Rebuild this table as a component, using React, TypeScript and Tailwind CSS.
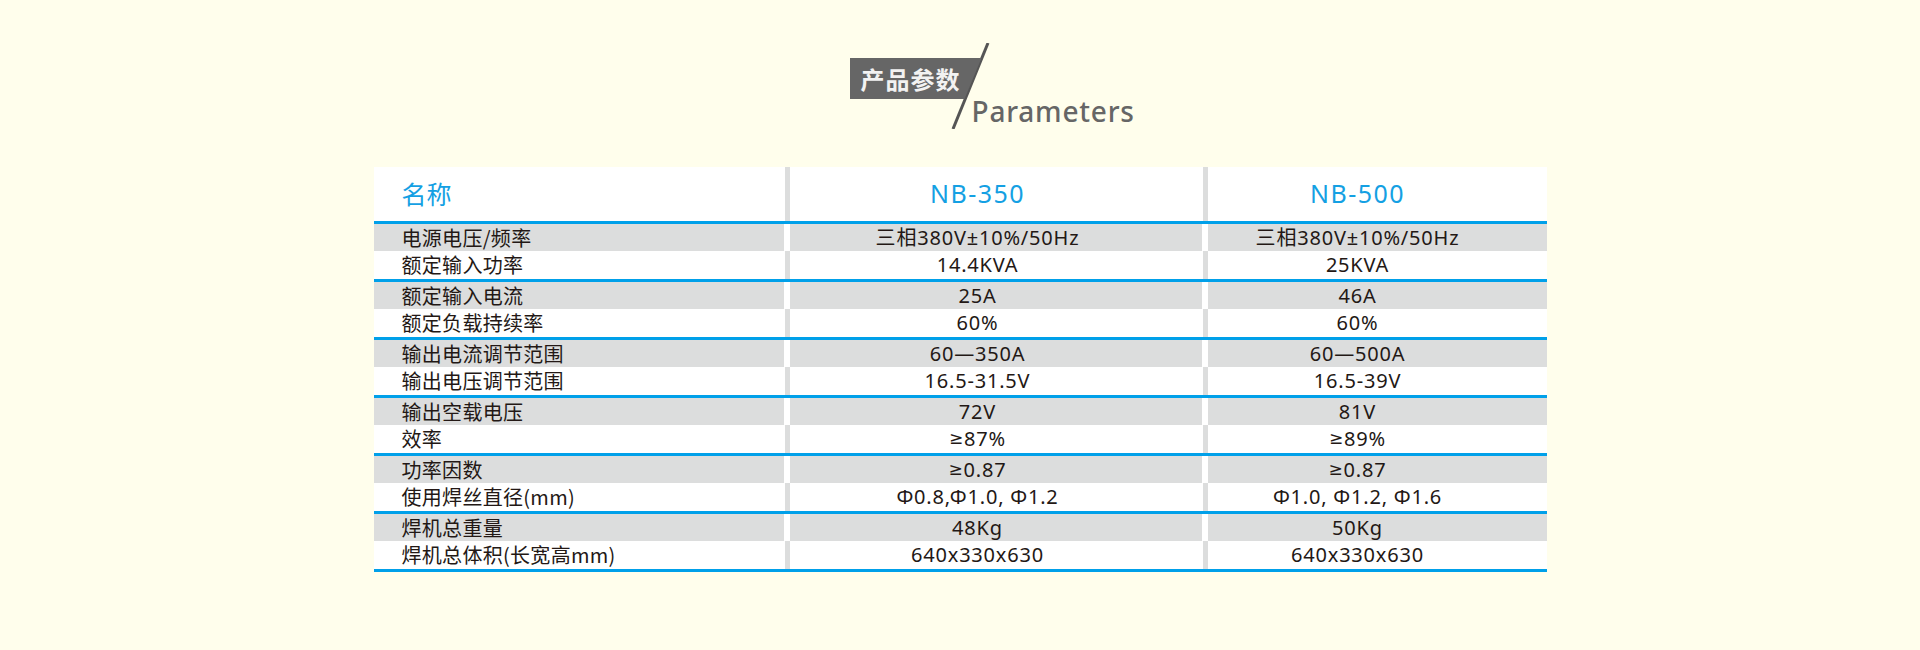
import React from "react"

const rows = [
  ["电源电压/频率", "三相380V±10%/50Hz", "三相380V±10%/50Hz"],
  ["额定输入功率", "14.4KVA", "25KVA"],
  ["额定输入电流", "25A", "46A"],
  ["额定负载持续率", "60%", "60%"],
  ["输出电流调节范围", "60—350A", "60—500A"],
  ["输出电压调节范围", "16.5-31.5V", "16.5-39V"],
  ["输出空载电压", "72V", "81V"],
  ["效率", "≥87%", "≥89%"],
  ["功率因数", "≥0.87", "≥0.87"],
  ["使用焊丝直径(mm)", "Φ0.8,Φ1.0, Φ1.2", "Φ1.0, Φ1.2, Φ1.6"],
  ["焊机总重量", "48Kg", "50Kg"],
  ["焊机总体积(长宽高mm)", "640x330x630", "640x330x630"],
]

const sans = "font-['Noto_Sans','Noto_Sans_CJK_SC',sans-serif]"
const cjk = "font-['Noto_Sans_CJK_SC',sans-serif]"

// the CJK font draws ≥ as a slanted glyph, so give it a latin one
function Value({ text }: { text: string }) {
  if (!text.startsWith("≥")) return <>{text}</>
  return (
    <>
      <span className="font-['DejaVu_Sans',sans-serif] text-[17px]">≥</span>
      {text.slice(1)}
    </>
  )
}

function Divider({ shaded }: { shaded: boolean }) {
  return (
    <div className="flex w-[6px] justify-end bg-white">
      {!shaded && <div className="w-[5px] bg-[#dcdddd]" />}
    </div>
  )
}

function Row({ cells, shaded }: { cells: string[]; shaded: boolean }) {
  const bg = shaded ? "bg-[#dcdddd]" : "bg-white"
  const h = shaded ? "h-[27px]" : "h-[28px]"
  return (
    <div className={`flex ${h}`}>
      <div className={`flex w-[410px] items-center pl-[28px] text-[20px] tracking-[0.3px] text-[#231815] ${cjk} ${bg}`}>
        {cells[0]}
      </div>
      <Divider shaded={shaded} />
      <div className={`flex w-[412px] items-center justify-center pr-[36px] text-[20px] tracking-[0.8px] text-[#231815] ${sans} ${bg}`}>
        <Value text={cells[1]} />
      </div>
      <Divider shaded={shaded} />
      <div className={`flex w-[339px] items-center justify-center pr-[39px] text-[20px] tracking-[0.8px] text-[#231815] ${sans} ${bg}`}>
        <Value text={cells[2]} />
      </div>
    </div>
  )
}

export default function App() {
  return (
    <div className="flex min-h-[650px] w-full justify-center bg-[#fffeec]">
      <div className="flex w-[1173px] flex-col pt-[43px]">
        {/* title */}
        <div className="relative ml-[476px] h-[86px] w-[290px]">
          <svg className="absolute inset-0" width="290" height="86" viewBox="0 0 290 86">
            <line x1="138" y1="0" x2="103" y2="86" stroke="#555555" strokeWidth="3" />
          </svg>
          <div
            className={`mt-[15px] flex h-[41px] w-[132px] items-center bg-[#666666] pl-[11px] text-[24px] font-bold tracking-[1px] text-[#f2f2f2] [clip-path:polygon(0_0,100%_0,115px_100%,0_100%)] ${cjk}`}
          >
            产品参数
          </div>
          <div className={`ml-[122px] mt-[-2px] text-[28px] leading-none font-medium tracking-[0.8px] text-[#666666] ${sans}`}>
            Parameters
          </div>
        </div>

        {/* table */}
        <div className="mt-[38px] flex flex-col">
          <div className="flex h-[54px]">
            <div className={`flex w-[410px] items-center bg-white pl-[28px] text-[25px] text-[#14a0e3] ${cjk}`}>名称</div>
            <Divider shaded={false} />
            <div className={`flex w-[412px] items-center justify-center bg-white pr-[36px] text-[25px] tracking-[1.5px] text-[#14a0e3] ${sans}`}>
              NB-350
            </div>
            <Divider shaded={false} />
            <div className={`flex w-[339px] items-center justify-center bg-white pr-[39px] text-[25px] tracking-[1.5px] text-[#14a0e3] ${sans}`}>
              NB-500
            </div>
          </div>
          {[0, 1, 2, 3, 4, 5].map((p) => (
            <div key={p} className="flex flex-col">
              <div className="h-[3px] bg-[#00a0e9]" />
              <Row cells={rows[p * 2]} shaded={true} />
              <Row cells={rows[p * 2 + 1]} shaded={false} />
            </div>
          ))}
          <div className="h-[3px] bg-[#00a0e9]" />
        </div>
      </div>
    </div>
  )
}
